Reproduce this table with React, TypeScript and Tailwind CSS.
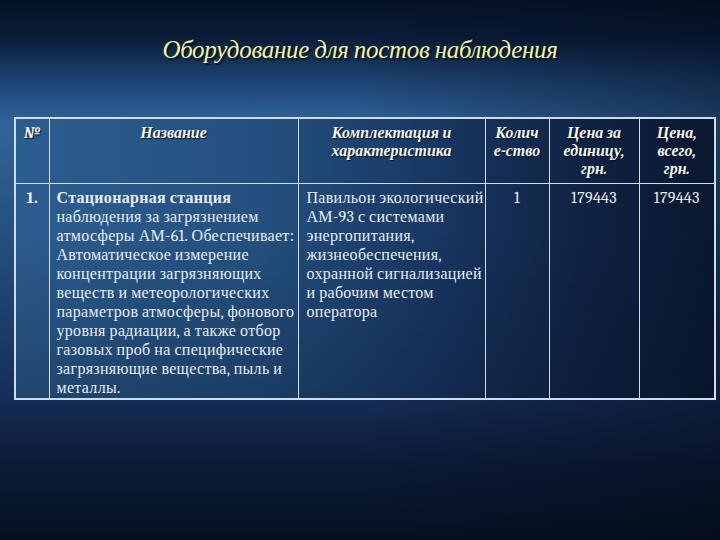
const nameLines = [
  "наблюдения за загрязнением",
  "атмосферы АМ-61. Обеспечивает:",
  "Автоматическое измерение",
  "концентрации загрязняющих",
  "веществ и метеорологических",
  "параметров атмосферы, фонового",
  "уровня радиации, а также отбор",
  "газовых проб на специфические",
  "загрязняющие вещества, пыль и",
  "металлы.",
];

const specLines = [
  "Павильон экологический",
  "АМ-93 с системами",
  "энергопитания,",
  "жизнеобеспечения,",
  "охранной сигнализацией",
  "и рабочим местом",
  "оператора",
];

const head =
  "border border-[#d3dde8] px-[2px] pt-[5px] align-top text-center text-[16px] leading-[18px] font-bold italic text-[#f4f4ee] [text-shadow:1px_1px_1px_#07101f]";
const cell =
  "border border-[#d3dde8] pt-[5px] align-top text-[16px] leading-[19px] tracking-[0.3px] text-[#e8edf2] whitespace-nowrap";

function Lines({ lines }: { lines: string[] }) {
  return (
    <>
      {lines.map((l, i) => (
        <div key={i}>{l}</div>
      ))}
    </>
  );
}

export default function App() {
  return (
    <div className="relative h-[540px] w-[720px] overflow-hidden bg-[linear-gradient(to_right,transparent_50%,rgba(3,10,24,0.45)_100%),linear-gradient(to_bottom,#051226_0%,#0a1c38_7%,#1d4472_15%,#31649a_23%,#2a5888_35%,#1f4270_55%,#16305a_72%,#0c1b36_86%,#051122_100%)] font-serif">
      <h1 className="pt-[34px] text-center text-[25px] leading-[32px] italic tracking-[-0.3px] text-[#f0f4a8] [text-shadow:2px_2px_1px_#0d1320]">
        Оборудование для постов наблюдения
      </h1>

      <table className="ml-[14px] mt-[51px] w-[700px] table-fixed border-collapse border-2 border-[#cfdbe8] bg-[linear-gradient(to_bottom,transparent_40%,rgba(6,16,36,0.3)_100%),linear-gradient(to_right,#2c5d90_0%,#24507f_35%,#173560_62%,#0f2242_82%,#0a1730_100%)]">
        <colgroup>
          <col className="w-[34px]" />
          <col className="w-[249px]" />
          <col className="w-[187px]" />
          <col className="w-[64px]" />
          <col className="w-[90px]" />
          <col className="w-[76px]" />
        </colgroup>
        <thead>
          <tr className="h-[65px]">
            <th className={head}>№</th>
            <th className={head}>Название</th>
            <th className={head}>
              Комплектация и<br />
              характеристика
            </th>
            <th className={head}>
              Колич<br />
              е-ство
            </th>
            <th className={head}>
              Цена за<br />
              единицу,<br />
              грн.
            </th>
            <th className={head}>
              Цена,<br />
              всего,<br />
              грн.
            </th>
          </tr>
        </thead>
        <tbody>
          <tr>
            <td className={cell + " text-center font-bold"}>1.</td>
            <td className={cell + " pl-[7px]"}>
              <div className="font-bold">Стационарная станция</div>
              <Lines lines={nameLines} />
            </td>
            <td className={cell + " pl-[8px]"}>
              <Lines lines={specLines} />
            </td>
            <td className={cell + " text-center"}>1</td>
            <td className={cell + " text-center"}>179443</td>
            <td className={cell + " text-center"}>179443</td>
          </tr>
        </tbody>
      </table>
    </div>
  );
}
